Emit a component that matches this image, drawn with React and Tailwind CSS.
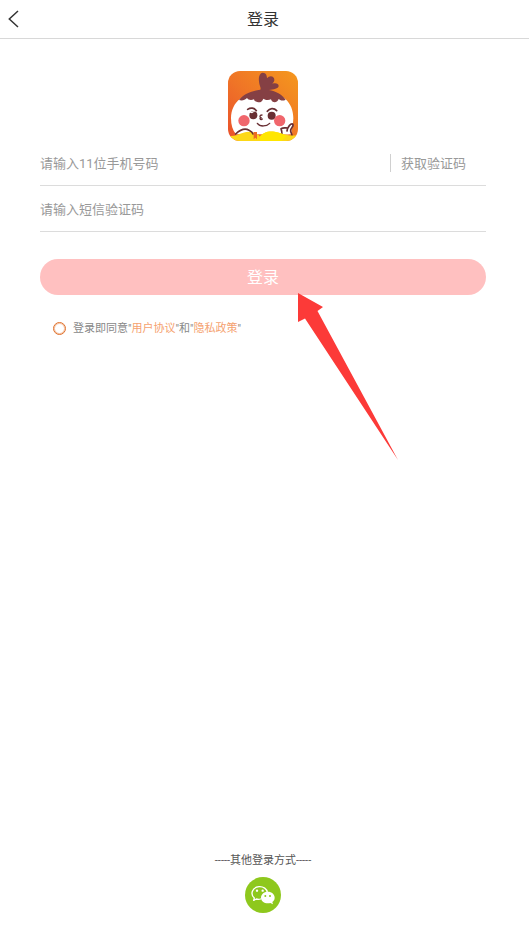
import React, { useState } from 'react';

const Logo = () => (
  <svg viewBox="0 0 210 210" className="w-[70px] h-[70px]" role="img" aria-label="Logo">
    <defs>
      <linearGradient id="logoBg" x1="0" y1="1" x2="1" y2="0">
        <stop offset="0" stopColor="#ea4f2c" />
        <stop offset="0.45" stopColor="#ef7327" />
        <stop offset="1" stopColor="#f5981d" />
      </linearGradient>
      <clipPath id="logoClip">
        <rect width="210" height="210" rx="36" />
      </clipPath>
    </defs>
    <g clipPath="url(#logoClip)">
      <rect width="210" height="210" fill="url(#logoBg)" />
      {/* Cara */}
      <path d="M9 142C9 116 20 96 36 84C54 70 76 64 101 64C128 64 154 70 171 83C188 97 196 118 196 142C196 162 190 178 182 190L24 190C14 178 9 162 9 142Z" fill="#fff" />
      {/* Pelo */}
      <path d="M33 87C46 70 68 60 97 56C100 50 94 44 93 32C91 16 96 6 104 5C114 5 117 14 117 22C123 14 135 14 138 22C141 30 137 34 133 38C143 35 152 37 152 45C151 53 137 55 123 57C144 61 161 70 173 86C164 91 156 88 152 84C150 91 142 96 134 92C131 90 130 88 129 85C121 88 112 87 106 83C103 92 95 96 88 93C81 92 79 89 78 85C68 89 60 86 57 81C51 88 41 90 33 87Z" fill="#854044" />
      {/* Cejas y ojos */}
      <path d="M59 115C68 109 79 110 85 119M146 119C138 110 125 111 118 121" fill="none" stroke="#692f33" strokeWidth="5" strokeLinecap="round" />
      <circle cx="76" cy="133" r="12" fill="#692f33" />
      <circle cx="131" cy="134" r="12" fill="#692f33" />
      <path d="M62 124L82 120L72 127Z" fill="#fff" />
      {/* Nariz y boca */}
      <path d="M102 132C94 132 94 140 100 141M96 142C97 147 101 147 103 144M88 157C96 168 116 167 125 157" fill="none" stroke="#692f33" strokeWidth="4" strokeLinecap="round" />
      <circle cx="48" cy="149" r="17" fill="#f0666c" />
      <circle cx="155" cy="149" r="17" fill="#f0666c" />
      {/* Mano */}
      <path d="M162 190L159 173L178 170L191 158C199 160 196 168 190 172L192 190Z" fill="#fff" />
      <path d="M162 192C162 185 161 178 159 173C166 169 172 171 179 171M177 180C179 167 188 157 194 159C199 164 189 171 188 177C187 184 192 188 192 194" fill="none" stroke="#692f33" strokeWidth="5" strokeLinecap="round" strokeLinejoin="round" />
      {/* Libro */}
      <path d="M0 194C18 197 30 190 46 185C66 179 86 184 96 197C103 185 120 179 140 182C162 185 176 198 210 192V210H0Z" fill="#fcd817" />
      <path d="M96 197C103 185 120 179 140 182C156 184 165 191 177 194L160 210H96Z" fill="#ffe600" />
      <path d="M23 189C36 177 50 170 63 178C70 181 74 185 75 189" fill="none" stroke="#692f33" strokeWidth="5" strokeLinecap="round" />
      <path d="M77 183H87V205L82 200L77 205Z" fill="#ed6b25" />
    </g>
  </svg>
);

const WechatIcon = () => (
  <svg viewBox="0 0 108 108" className="w-9 h-9" aria-hidden="true">
    <circle cx="54" cy="54" r="54" fill="#8ec81d" />
    <path d="M47 66C42 68 37 67 34 66L26 70L28 63C15 52 21 31 42 29C55 28 66 36 67 46" fill="none" stroke="#fff" strokeWidth="4" strokeLinejoin="round" strokeLinecap="round" />
    <circle cx="36" cy="41" r="3.5" fill="#fff" />
    <circle cx="53" cy="41" r="3.5" fill="#fff" />
    <path d="M68 44C81 44 89 52 89 62C89 68 86 72 82 75L84 82L76 78C61 82 48 73 48 62C48 52 57 44 68 44Z" fill="#fff" />
    <circle cx="61" cy="57" r="3" fill="#8ec81d" />
    <circle cx="75" cy="57" r="3" fill="#8ec81d" />
  </svg>
);

const App = () => {
  const [phone, setPhone] = useState('');
  const [code, setCode] = useState('');
  const [agreed, setAgreed] = useState(false);

  return (
    <div className="min-h-screen flex flex-col bg-white font-[Roboto,'Noto_Sans_CJK_SC',sans-serif]">
      <header className="grid grid-cols-[40px_1fr_40px] items-center h-[39px] pr-[3px] border-b border-[#d8d8d8]">
        <button type="button" aria-label="返回" className="flex items-center h-full pl-2">
          <svg viewBox="0 0 11 18" className="w-[11px] h-[18px]" fill="none" stroke="#333" strokeWidth="1.5">
            <path d="M10 1L1.3 9L10 17" />
          </svg>
        </button>
        <h1 className="pt-0.5 text-base text-center text-[#333]">登录</h1>
      </header>

      <main className="flex flex-col pl-10 pr-[43px] pt-8">
        <div className="flex justify-center">
          <Logo />
        </div>

        <form onSubmit={(e) => e.preventDefault()}>
          <div className="flex items-center h-[45px] border-b border-[#dcdcdc]">
            <input
              type="tel"
              aria-label="手机号码"
              placeholder="请输入11位手机号码"
              value={phone}
              onChange={(e) => setPhone(e.target.value)}
              className="flex-1 min-w-0 pt-0.5 text-[13px] text-[#333] placeholder:text-[#999] outline-none"
            />
            <button type="button" className="border-l border-[#d0d0d0] pl-[10px] pr-5 pt-0.5 text-[13px] leading-4 text-[#999]">
              获取验证码
            </button>
          </div>
          <div className="flex items-center h-[46px] border-b border-[#dcdcdc]">
            <input
              type="text"
              aria-label="短信验证码"
              placeholder="请输入短信验证码"
              value={code}
              onChange={(e) => setCode(e.target.value)}
              className="flex-1 min-w-0 pt-0.5 text-[13px] text-[#333] placeholder:text-[#999] outline-none"
            />
          </div>

          <div className="relative mt-[27px]">
            <button type="submit" className="w-full h-9 pt-0.5 rounded-full bg-[#ffc0c0] text-base text-white">
              登录
            </button>
            {/* Flecha que señala el botón */}
            <svg viewBox="0 0 100 167" className="absolute left-1/2 top-[34px] ml-[35px] w-[100px] h-[167px] pointer-events-none" aria-hidden="true">
              <path d="M0 0L25 14L19.5 18L100 167L7 25.5L0 29Z" fill="#fc3a38" />
            </svg>
          </div>

          <div className="flex items-center mt-6 pl-[13px] text-[11px] leading-4 text-[#888]">
            <input
              id="agree"
              type="checkbox"
              checked={agreed}
              onChange={(e) => setAgreed(e.target.checked)}
              className="appearance-none w-[13px] h-[13px] mr-[7px] rounded-full border border-[#e0702a] ring-1 ring-inset ring-[#e0702a]/40 checked:bg-[#e0702a]"
            />
            <p className="pt-0.5">
              <label htmlFor="agree">登录即同意</label>"
              <a href="#terms" className="text-[#f5a26f]">用户协议</a>"和"
              <a href="#privacy" className="text-[#f5a26f]">隐私政策</a>"
            </p>
          </div>
        </form>
      </main>

      <footer className="flex flex-col items-center mt-auto pb-[14px] pr-[3px]">
        <p className="text-[11px] leading-4 text-[#555]">-----其他登录方式-----</p>
        <button type="button" aria-label="微信登录" className="mt-2">
          <WechatIcon />
        </button>
      </footer>
    </div>
  );
};

export default App;
